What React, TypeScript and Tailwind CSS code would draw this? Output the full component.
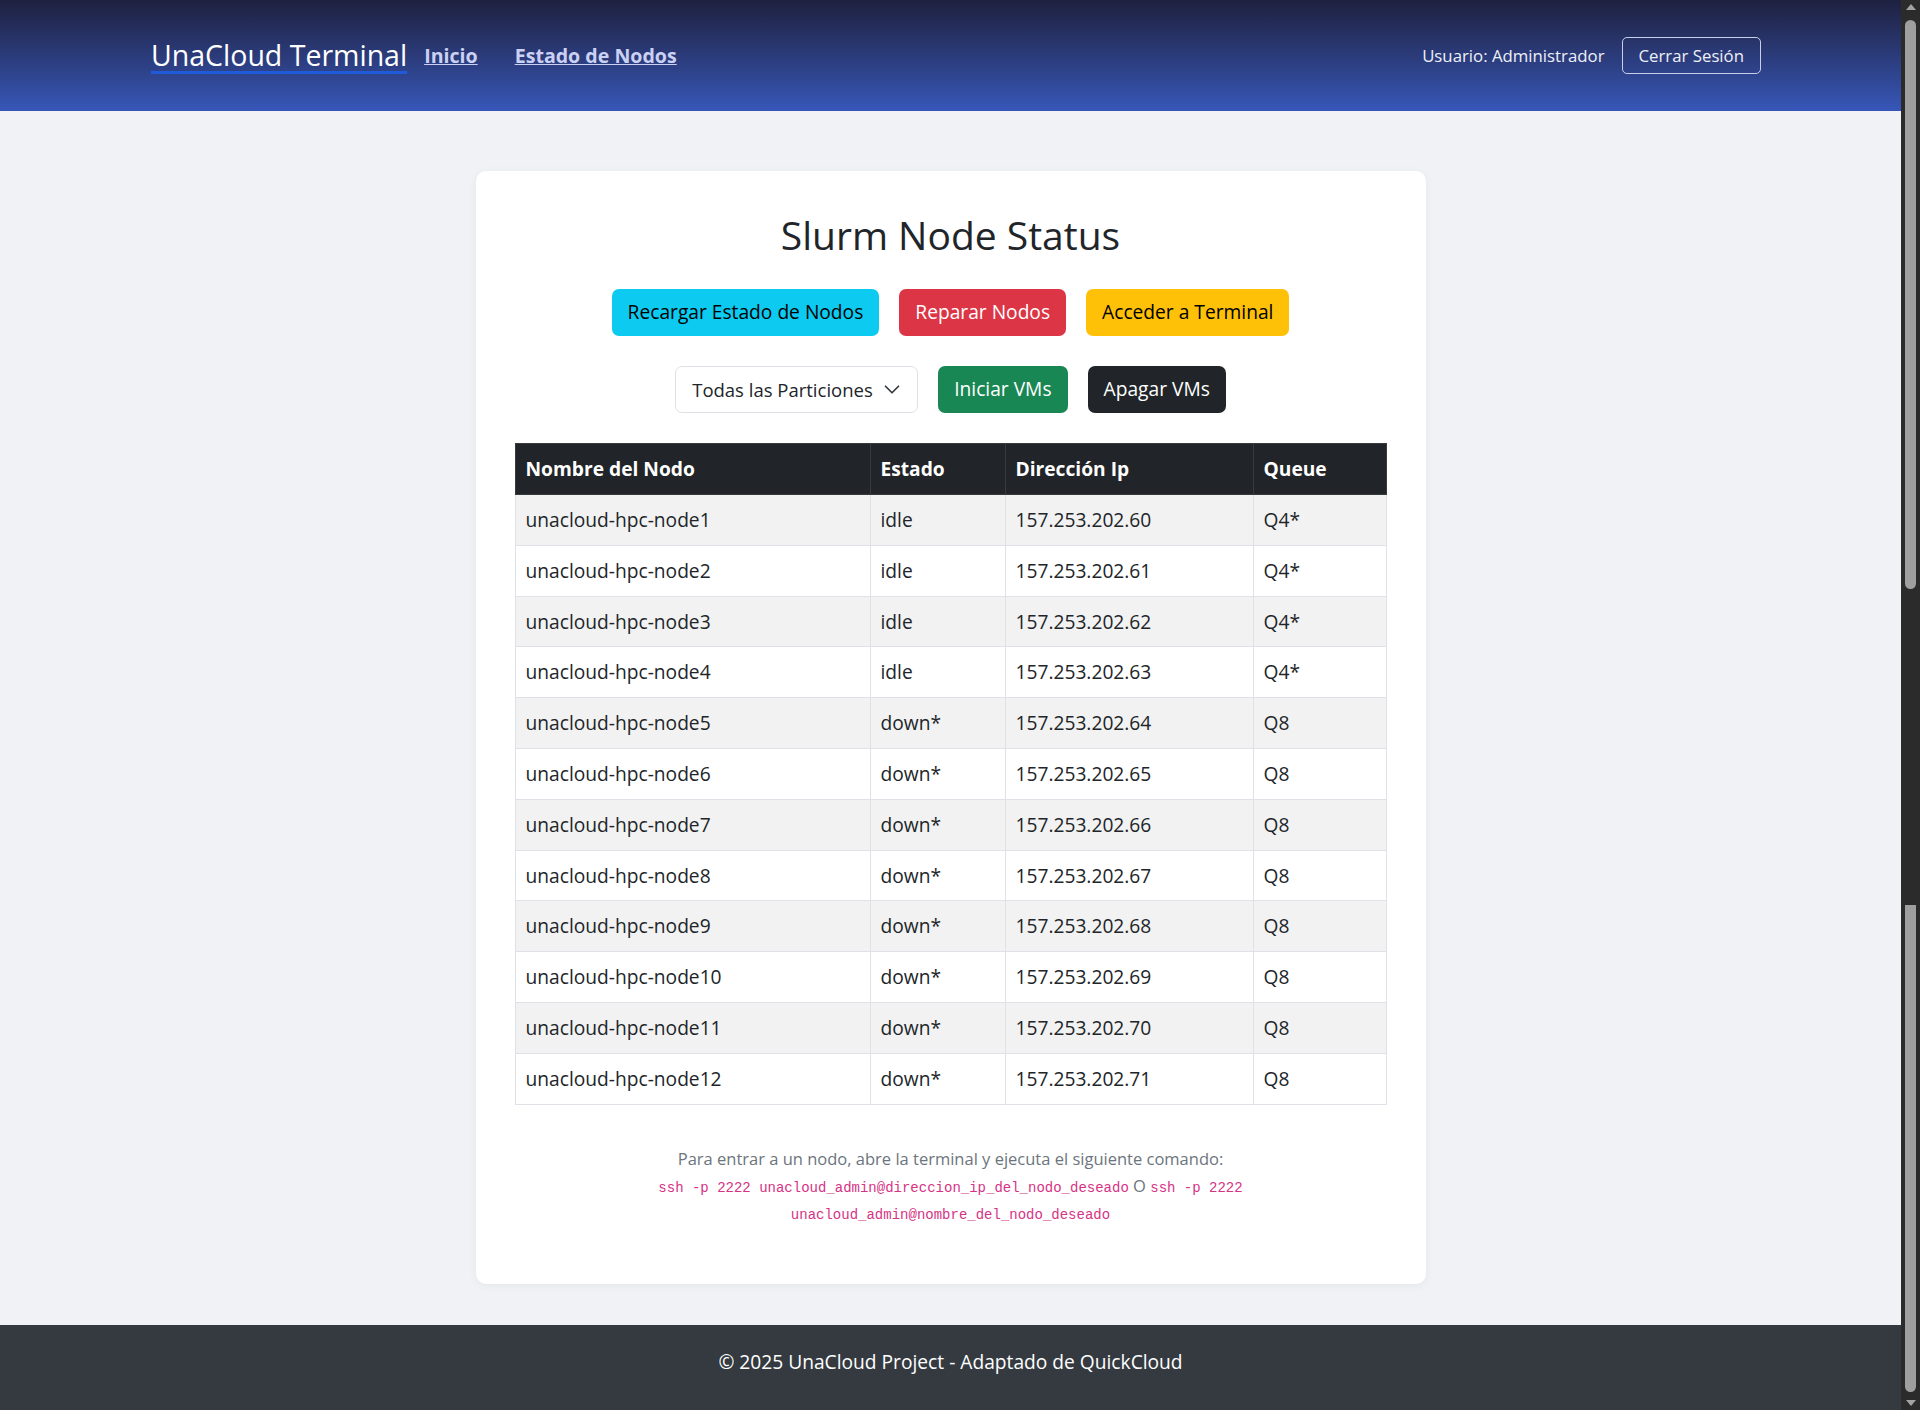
const nodes = Array.from({ length: 12 }, (_, i) => ({
  name: `unacloud-hpc-node${i + 1}`,
  state: i < 4 ? 'idle' : 'down*',
  ip: `157.253.202.${60 + i}`,
  queue: i < 4 ? 'Q4*' : 'Q8',
}))

function Navbar() {
  return (
    <nav className="h-[111px] shrink-0 bg-linear-to-b from-[#1e2140] to-[#3757b9] flex items-center justify-between pl-[151px] pr-[140px]">
      <div className="flex items-center">
        <a className="text-[28.5px] text-white underline decoration-[#1f5ad8] decoration-[3px] underline-offset-[5px] mr-[17px]">
          UnaCloud Terminal
        </a>
        <a className="text-[19.6px] font-bold text-[#cbd1f2] underline mr-[37px]">Inicio</a>
        <a className="text-[19.6px] font-bold text-[#cbd1f2] underline">Estado de Nodos</a>
      </div>
      <div className="flex items-center">
        <span className="text-[16.8px] text-[#eef0f8] mr-[17px]">Usuario: Administrador</span>
        <button className="h-[37px] px-[16px] text-[16.8px] text-[#eef0f8] border border-[#c9cfe8] rounded-[5px]">
          Cerrar Sesión
        </button>
      </div>
    </nav>
  )
}

function Btn({ cls, children }: { cls: string; children: React.ReactNode }) {
  return <button className={`h-[47px] px-[16px] rounded-[7px] text-[19.2px] ${cls}`}>{children}</button>
}

function Chevron() {
  return (
    <svg width="18" height="13" viewBox="0 0 16 12" fill="none">
      <path d="m2 3 6 6 6-6" stroke="#343a40" strokeWidth="1.6" strokeLinecap="round" strokeLinejoin="round" />
    </svg>
  )
}

function NodeTable() {
  return (
    <table className="w-full border-collapse text-[19.2px] text-[#212529]">
      <colgroup>
        <col className="w-[355px]" />
        <col className="w-[135px]" />
        <col className="w-[248px]" />
        <col />
      </colgroup>
      <thead>
        <tr className="bg-[#212529] text-white">
          {['Nombre del Nodo', 'Estado', 'Dirección Ip', 'Queue'].map((h) => (
            <th key={h} className="text-left font-bold px-[10px] py-[10px] leading-[30px] border border-[#373b3e]">
              {h}
            </th>
          ))}
        </tr>
      </thead>
      <tbody>
        {nodes.map((n, i) => (
          <tr key={n.name} className={i % 2 === 0 ? 'bg-[#f2f2f2]' : 'bg-white'}>
            {[n.name, n.state, n.ip, n.queue].map((v, j) => (
              <td key={j} className="px-[10px] py-[10px] leading-[29.8px] border border-[#dee2e6]">
                {v}
              </td>
            ))}
          </tr>
        ))}
      </tbody>
    </table>
  )
}

function Scrollbar() {
  return (
    <div className="w-[19px] shrink-0 bg-[#2b2b2b] flex flex-col items-center">
      <div className="mt-[4px] w-0 h-0 border-x-[5px] border-x-transparent border-b-[6px] border-b-[#a3a3a3]" />
      <div className="mt-[10px] w-[11px] h-[569px] rounded-full bg-[#9f9f9f]" />
      <div className="flex-1" />
      <div className="w-[11px] h-[487px] rounded-b-full bg-[#9f9f9f]" />
      <div className="mt-[8px] mb-[4px] w-0 h-0 border-x-[5px] border-x-transparent border-t-[6px] border-t-[#a3a3a3]" />
    </div>
  )
}

const code = 'font-[Liberation_Mono,monospace] text-[14px] leading-none text-[#d63384]'

export default function App() {
  return (
    <div className="flex h-[1410px] overflow-hidden font-[Open_Sans,sans-serif]">
      <div className="flex-1 flex flex-col bg-[#f0f2f5]">
        <Navbar />
        <main className="flex-1 flex justify-center items-start pt-[60px]">
          <div className="w-[950px] bg-white rounded-[10px] shadow-[0_2px_10px_rgba(0,0,0,0.05)] px-[39px] pt-[40px] pb-[38px]">
            <h1 className="text-center text-[39px] leading-[48px] text-[#212529]">Slurm Node Status</h1>
            <div className="mt-[30px] flex justify-center gap-[20px]">
              <Btn cls="bg-[#0dcaf0] text-black">Recargar Estado de Nodos</Btn>
              <Btn cls="bg-[#dc3545] text-white">Reparar Nodos</Btn>
              <Btn cls="bg-[#ffc107] text-black">Acceder a Terminal</Btn>
            </div>
            <div className="mt-[30px] flex justify-center gap-[20px]">
              <div className="h-[47px] w-[243px] flex items-center justify-between pl-[16px] pr-[16px] bg-white border border-[#dee2e6] rounded-[7px] text-[18.5px] text-[#212529]">
                <span>Todas las Particiones</span>
                <Chevron />
              </div>
              <Btn cls="bg-[#198754] text-white">Iniciar VMs</Btn>
              <Btn cls="bg-[#212529] text-white">Apagar VMs</Btn>
            </div>
            <div className="mt-[30px]">
              <NodeTable />
            </div>
            <p className="mt-[40px] mb-[20px] text-center text-[16.5px] leading-[27px] text-[#6c757d]">
              Para entrar a un nodo, abre la terminal y ejecuta el siguiente comando:
              <br />
              <code className={code}>ssh -p 2222 unacloud_admin@direccion_ip_del_nodo_deseado</code> O{' '}
              <code className={code}>ssh -p 2222 unacloud_admin@nombre_del_nodo_deseado</code>
            </p>
          </div>
        </main>
        <footer className="h-[85px] shrink-0 bg-[#343a40] text-white text-center text-[19.2px] leading-[27px] pt-[23px]">
          © 2025 UnaCloud Project - Adaptado de QuickCloud
        </footer>
      </div>
      <Scrollbar />
    </div>
  )
}
